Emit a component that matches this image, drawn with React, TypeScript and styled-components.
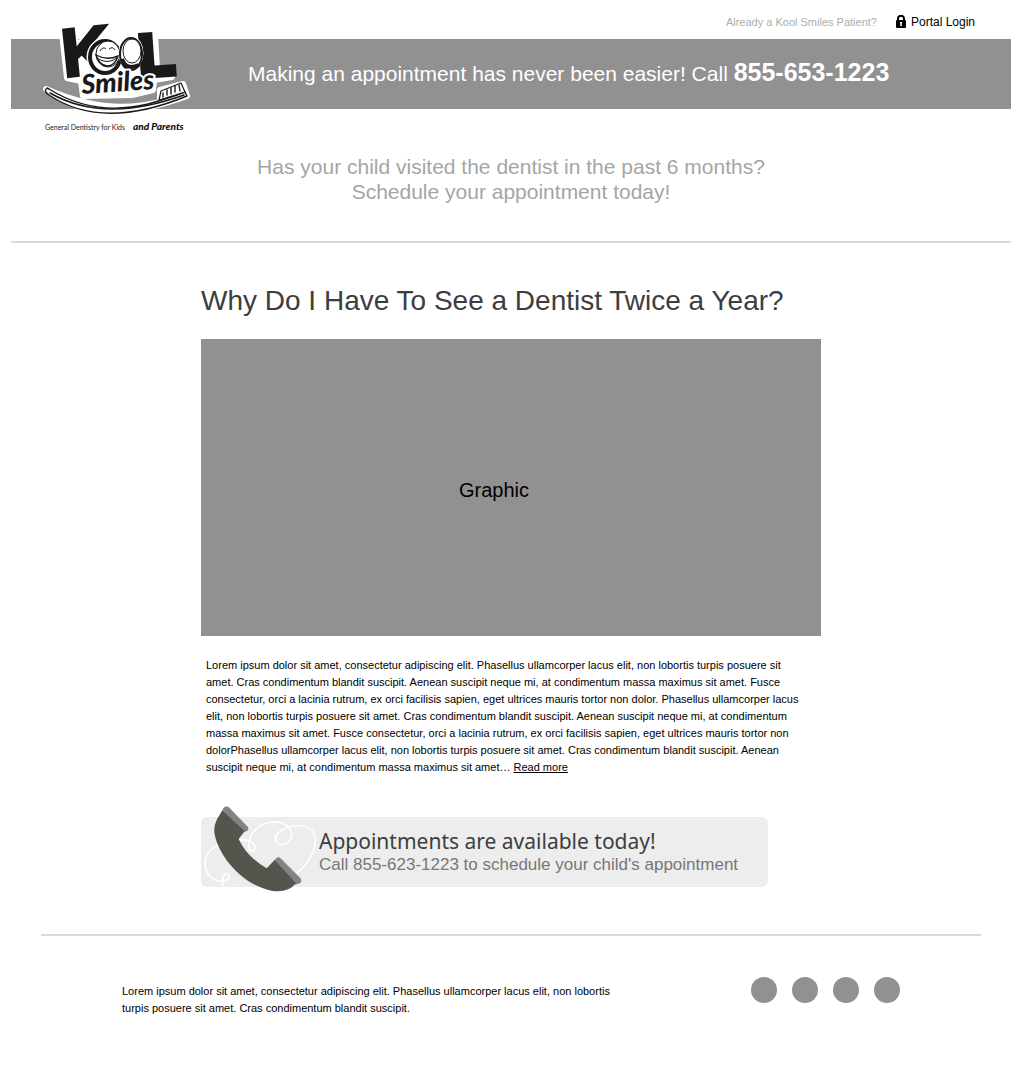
import React from "react";
import styled, { createGlobalStyle } from "styled-components";

const GlobalStyle = createGlobalStyle`
  * { box-sizing: border-box; }
  body {
    margin: 0;
    background: #fff;
    color: #000;
    font-family: "Liberation Sans", Arial, Helvetica, sans-serif;
  }
  h1, h2, p, ul { margin: 0; padding: 0; font-weight: 400; }
`;

const Page = styled.div`
  padding: 0 11px 52px;
`;

const TopBar = styled.nav`
  display: flex;
  justify-content: flex-end;
  align-items: center;
  gap: 19px;
  height: 39px;
  padding: 4px 36px 0 0;
`;

const PatientNote = styled.span`
  font-size: 11px;
  color: #acacac;
`;

const PortalLink = styled.a`
  display: flex;
  align-items: center;
  gap: 5px;
  font-size: 12px;
  color: #000;
  text-decoration: none;
`;

const Banner = styled.header`
  position: relative;
  display: flex;
  align-items: center;
  height: 70px;
  padding: 0 0 2px 237px;
  background: #919191;
`;

const BannerText = styled.p`
  font-size: 21px;
  line-height: 28px;
  color: #fff;
`;

const Phone = styled.strong`
  font-size: 25px;
`;

const Brand = styled.a`
  position: absolute;
  left: 25px;
  top: -23px;
  width: 160px;
  color: #222;
  text-decoration: none;
`;

const LogoArt = styled.svg`
  display: block;
  overflow: visible;
`;

const Tagline = styled.span`
  display: flex;
  align-items: baseline;
  gap: 8px;
  padding-left: 9px;
  font: 7px/14px Lato, sans-serif;
  white-space: nowrap;
`;

const TaglineAccent = styled.b`
  font: italic 900 10px/14px Lato, sans-serif;
  color: #111;
`;

const Intro = styled.section`
  padding: 45px 0 37px;
  border-bottom: 2px solid #dadada;
  text-align: center;
`;

const IntroText = styled.p`
  font-size: 21px;
  line-height: 25px;
  color: #a5a5a5;
`;

const Article = styled.main`
  max-width: 620px;
  margin: 0 auto;
  padding-top: 40px;
`;

const Title = styled.h1`
  font-size: 28px;
  line-height: 36px;
  color: #3d3d3d;
`;

const Graphic = styled.div`
  display: flex;
  align-items: center;
  justify-content: center;
  height: 297px;
  margin-top: 20px;
  padding: 6px 34px 0 0;
  background: #919191;
  font-size: 20px;
`;

const Copy = styled.p`
  font-size: 11px;
  line-height: 17px;
`;

const ArticleCopy = styled(Copy)`
  margin-top: 21px;
  padding: 0 14px 0 5px;
`;

const ReadMore = styled.a`
  color: #000;
`;

const Callout = styled.aside`
  position: relative;
  max-width: 567px;
  height: 70px;
  margin-top: 41px;
  padding: 12px 0 0 118px;
  border-radius: 6px;
  background: #ededed;
`;

const CalloutArt = styled.svg`
  position: absolute;
  left: 0;
  top: -17px;
`;

const CalloutTitle = styled.h2`
  position: relative;
  font: 21px/24px "Noto Sans", sans-serif;
  color: #3a403d;
`;

const CalloutText = styled.p`
  position: relative;
  font-size: 17px;
  line-height: 24px;
  color: #777;
`;

const Footer = styled.footer`
  display: flex;
  justify-content: space-between;
  align-items: flex-start;
  margin: 47px 30px 0;
  padding: 41px 81px 0;
  border-top: 2px solid #dadada;
`;

const FooterCopy = styled(Copy)`
  max-width: 505px;
  padding-top: 6px;
`;

const SocialList = styled.ul`
  display: flex;
  gap: 15px;
  list-style: none;
`;

const SocialLink = styled.a`
  display: block;
  width: 26px;
  height: 26px;
  border-radius: 50%;
  background: #919191;
`;

const WordmarkLetter = styled.text`
  font-family: "Liberation Sans Narrow", "Liberation Sans", sans-serif;
  font-weight: 700;
`;

const WordmarkScript = styled.text`
  font: italic 900 27px Lato, sans-serif;
  paint-order: stroke;
  stroke: #fff;
  stroke-width: 4px;
  stroke-linejoin: round;
`;

function Logo() {
  return (
    <LogoArt width="160" height="103" viewBox="0 0 160 103" role="img" aria-label="Kool Smiles">
      <g fill="#fff" stroke="#fff" strokeWidth="6" strokeLinejoin="round" strokeLinecap="round">
        <path d="M25 9 36 8 40 29 57 18 62 24 70 22 84 24 96 20 105 23 106 16 119 18 121 53 136 53 136 61 118 64 117 74 96 79 47 80 45 65 31 62Z" />
        <path d="M10 73Q58 114 151 80L147 68 124 74 124 86Q70 100 10 73Z" />
      </g>
      <g fill="#191919" stroke="#191919">
        <WordmarkLetter x="28" y="61" fontSize="68" strokeWidth="3" transform="rotate(-6 28 61)">K</WordmarkLetter>
        <WordmarkLetter x="104" y="60" fontSize="58" strokeWidth="6" transform="rotate(-4 104 60)">L</WordmarkLetter>
      </g>
      <g fill="#fff" stroke="#191919">
        <ellipse cx="69" cy="41" rx="18" ry="19" stroke="#fff" />
        <ellipse cx="69" cy="41" rx="15" ry="16" strokeWidth="4" />
        <ellipse cx="72" cy="38" rx="12" ry="13" strokeWidth="1" />
        <path d="M60 39Q71 45 82 40Q79 50 71 50Q63 49 60 39Z" strokeWidth="1.4" />
        <path d="M61 42Q71 49 81 42" fill="none" strokeWidth="1" />
        <path d="M64 35q3-5 6-2M73 33q4-3 6 1" strokeWidth="1" fill="none" />
        <ellipse cx="95" cy="37" rx="12" ry="17" stroke="#fff" />
        <ellipse cx="95" cy="38" rx="11" ry="16" strokeWidth="2" />
        <ellipse cx="96" cy="35" rx="9" ry="12" strokeWidth="1" />
        <path d="M86 43q4 12 17 6" fill="none" strokeWidth="4" />
      </g>
      <WordmarkScript x="46" y="78" fill="#191919" transform="rotate(-4 46 78)">Smiles</WordmarkScript>
      <g fill="#fff" stroke="#191919" strokeLinecap="round" strokeLinejoin="round">
        <path d="M11 72Q7 75 13 79Q66 115 151 80L149 76Q134 82 112 88Q58 101 13 73Z" strokeWidth="1.4" />
        <path d="M14 77Q68 108 148 79" fill="none" strokeWidth="1.6" />
        <path d="M123 84 125 75 145 67 149 76Z" strokeWidth="1.2" />
        <path d="m127 77 0 4m4-7 0 5m4-7 0 6m4-8 0 6m4-7 1 6" fill="none" strokeWidth="1.4" />
      </g>
    </LogoArt>
  );
}

function LockIcon() {
  return (
    <svg width="10" height="13" viewBox="0 0 10 13" aria-hidden="true">
      <path d="M2 6V3.8a3 3 0 0 1 6 0V6" fill="none" stroke="#000" strokeWidth="2" />
      <rect y="5" width="10" height="8" rx="1" />
      <path d="M4 7h2v4H4z" fill="#fff" />
      <path d="M5 8.5v2" stroke="#777" />
    </svg>
  );
}

function PhoneArt() {
  return (
    <CalloutArt width="120" height="100" viewBox="14 0 360 300" aria-hidden="true">
      <path
        d="M80 260Q74 235 88 221Q102 221 97 236Q82 250 57 240C23 225 16 178 42 152C72 122 122 116 155 122C180 127 180 153 169 154C155 156 153 119 170 98C197 61 247 59 270 76C300 98 283 132 259 133C236 134 231 109 249 96C282 67 340 73 354 102C368 143 330 205 292 224"
        fill="none"
        stroke="#fff"
        strokeWidth="5"
      />
      <path d="M78 31Q84 16 97 21L154 80Q160 88 150 94L143 96Z" fill="#878183" />
      <path d="M235 181Q243 166 254 176L311 233Q320 243 310 250L297 254Z" fill="#878183" />
      <path d="M78 31 145 94 127 117Q150 169 211 205L235 180 299 250Q275 280 225 272C130 253 61 157 54 96Q52 78 62 58Z" fill="#54564e" />
    </CalloutArt>
  );
}

const socials = ["Facebook", "Twitter", "YouTube", "Instagram"];

export default function App() {
  return (
    <>
      <GlobalStyle />
      <Page>
        <TopBar>
          <PatientNote>Already a Kool Smiles Patient?</PatientNote>
          <PortalLink href="#portal"><LockIcon />Portal Login</PortalLink>
        </TopBar>
        <Banner>
          <Brand href="#home">
            <Logo />
            <Tagline>General Dentistry for Kids <TaglineAccent>and Parents</TaglineAccent></Tagline>
          </Brand>
          <BannerText>
            Making an appointment has never been easier! Call <Phone>855-653-1223</Phone>
          </BannerText>
        </Banner>
        <Intro>
          <IntroText>
            Has your child visited the dentist in the past 6 months?<br />
            Schedule your appointment today!
          </IntroText>
        </Intro>
        <Article>
          <Title>Why Do I Have To See a Dentist Twice a Year?</Title>
          <Graphic>Graphic</Graphic>
          <ArticleCopy>
            Lorem ipsum dolor sit amet, consectetur adipiscing elit. Phasellus ullamcorper lacus elit, non lobortis turpis posuere sit
            amet. Cras condimentum blandit suscipit. Aenean suscipit neque mi, at condimentum massa maximus sit amet. Fusce
            consectetur, orci a lacinia rutrum, ex orci facilisis sapien, eget ultrices mauris tortor non dolor. Phasellus ullamcorper lacus
            elit, non lobortis turpis posuere sit amet. Cras condimentum blandit suscipit. Aenean suscipit neque mi, at condimentum
            massa maximus sit amet. Fusce consectetur, orci a lacinia rutrum, ex orci facilisis sapien, eget ultrices mauris tortor non
            dolorPhasellus ullamcorper lacus elit, non lobortis turpis posuere sit amet. Cras condimentum blandit suscipit. Aenean
            suscipit neque mi, at condimentum massa maximus sit amet… <ReadMore href="#more">Read more</ReadMore>
          </ArticleCopy>
          <Callout>
            <PhoneArt />
            <CalloutTitle>Appointments are available today!</CalloutTitle>
            <CalloutText>Call 855-623-1223 to schedule your child's appointment</CalloutText>
          </Callout>
        </Article>
        <Footer>
          <FooterCopy>
            Lorem ipsum dolor sit amet, consectetur adipiscing elit. Phasellus ullamcorper lacus elit, non lobortis
            turpis posuere sit amet. Cras condimentum blandit suscipit.
          </FooterCopy>
          <SocialList>
            {socials.map((name) => (
              <li key={name}><SocialLink href={"#" + name.toLowerCase()} aria-label={name} /></li>
            ))}
          </SocialList>
        </Footer>
      </Page>
    </>
  );
}
